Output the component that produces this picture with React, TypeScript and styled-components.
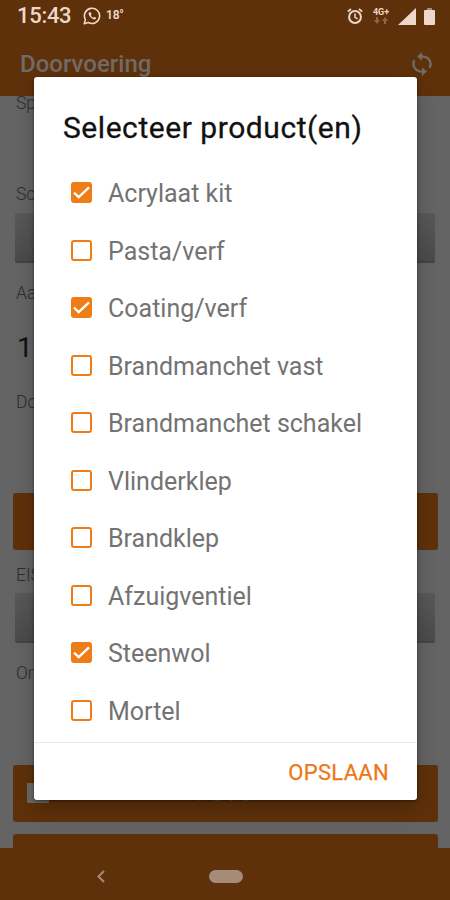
import React from "react";
import styled, { createGlobalStyle } from "styled-components";

const Global = createGlobalStyle`
  * { box-sizing: border-box; }
  body { margin: 0; background: #646464; font-family: Roboto, "Liberation Sans", sans-serif; }
`;

const Screen = styled.div`
  position: relative;
  width: 450px;
  height: 900px;
  overflow: hidden;
  display: flex;
  flex-direction: column;
  background: #646464;
`;

const StatusBar = styled.header`
  flex: none;
  height: 32px;
  display: flex;
  align-items: center;
  padding: 0 15px 0 17px;
  background: #5f310a;
  color: #eed8cb;
`;

const Clock = styled.span`
  width: 66px;
  font-size: 22px;
  font-weight: 500;
  letter-spacing: -0.3px;
  line-height: 32px;
`;

const Temperature = styled.span`
  margin-left: 5px;
  font-size: 12px;
  font-weight: 600;
  letter-spacing: -0.2px;
  line-height: 30px;
  align-self: flex-start;
`;

const StatusIcons = styled.div`
  margin-left: auto;
  display: flex;
  align-items: center;
`;

const Network = styled.div`
  display: flex;
  flex-direction: column;
  align-items: center;
  width: 18px;
  margin: 0 8px 0 9px;
  font-size: 9px;
  font-weight: 700;
  line-height: 9px;
`;

const AppBar = styled.div`
  flex: none;
  height: 64px;
  display: flex;
  align-items: center;
  justify-content: space-between;
  padding: 0 17px 0 20px;
  background: #5f310a;
  color: #706b68;
`;

const AppTitle = styled.h1`
  margin: 0;
  font-size: 24px;
  font-weight: 500;
  line-height: 64px;
`;

const Form = styled.main`
  flex: 1;
  min-height: 0;
  overflow: hidden;
  display: flex;
  flex-direction: column;
  padding: 0 12px 0 13px;

  & > :first-child {
    margin-top: -3px;
  }
`;

const Label = styled.div<{ $space: number }>`
  flex: none;
  height: 20px;
  margin-bottom: ${(p) => p.$space}px;
  padding-left: 3px;
  color: #2d2d2d;
  font-size: 17.5px;
  font-weight: 300;
  line-height: 20px;
`;

const Count = styled.div`
  flex: none;
  height: 36px;
  margin-bottom: 26px;
  padding-left: 4px;
  color: #111;
  font-size: 28px;
  line-height: 36px;
`;

const Select = styled.div<{ $space: number }>`
  flex: none;
  height: 50px;
  margin: 0 3px ${(p) => p.$space}px 2px;
  border-radius: 2px;
  border-bottom: 2px solid #444;
  background: linear-gradient(#595959, #4b4b4b);
`;

const Action = styled.div<{ $space: number }>`
  flex: none;
  height: 57px;
  margin-bottom: ${(p) => p.$space}px;
  display: flex;
  align-items: center;
  justify-content: center;
  position: relative;
  border-radius: 3px;
  background: #5f310a;
  color: #566050;
  font-size: 21px;
  letter-spacing: 1px;
`;

const Thumb = styled.span`
  position: absolute;
  left: 14px;
  top: 18px;
  width: 22px;
  height: 20px;
  background: #6b6865;
`;

const NavBar = styled.nav`
  flex: none;
  height: 52px;
  display: grid;
  grid-template-columns: 201px 48px 201px;
  align-items: center;
  justify-items: center;
  background: #5f310a;
  padding-top: 5px;
`;

const HomePill = styled.span`
  width: 34px;
  height: 13px;
  margin-left: 2px;
  border-radius: 7px;
  background: #a78b79;
`;

const Dialog = styled.section`
  position: absolute;
  left: 34px;
  top: 77px;
  width: 383px;
  height: 723px;
  display: flex;
  flex-direction: column;
  border-radius: 3px;
  background: #fff;
  box-shadow: 0 10px 22px rgba(0, 0, 0, 0.22), 0 1px 3px rgba(0, 0, 0, 0.45);
`;

const DialogTitle = styled.h2`
  flex: none;
  height: 87px;
  margin: 0;
  padding: 31px 0 0 29px;
  color: #111;
  font-size: 30px;
  font-weight: 400;
  letter-spacing: 0.55px;
  line-height: 40px;
  white-space: nowrap;
  -webkit-text-stroke: 0.3px #111;
`;

const Options = styled.div`
  flex: 1;
  min-height: 0;
  overflow: hidden;
`;

const Option = styled.div`
  height: 57.5px;
  display: flex;
  align-items: center;
  gap: 16px;
  padding-left: 37px;
  color: #737373;
  font-size: 25px;
  line-height: 30px;
  white-space: nowrap;
`;

const OptionText = styled.span`
  padding-top: 3px;
`;

const Box = styled.span<{ $on: boolean }>`
  flex: none;
  width: 21px;
  height: 21px;
  display: flex;
  align-items: center;
  justify-content: center;
  border: 2px solid #ef7d17;
  border-radius: 3px;
  background: ${(p) => (p.$on ? "#ef7d17" : "#fff")};
`;

const Footer = styled.footer`
  flex: none;
  height: 58px;
  display: flex;
  align-items: center;
  justify-content: flex-end;
  padding: 2px 28px 0 0;
  border-top: 1px solid #eaeaea;
`;

const Save = styled.span`
  color: #ee7716;
  font-size: 22px;
  font-weight: 400;
  letter-spacing: 0.3px;
  -webkit-text-stroke: 0.25px #ee7716;
`;

const products = [
  { name: "Acrylaat kit", on: true },
  { name: "Pasta/verf", on: false },
  { name: "Coating/verf", on: true },
  { name: "Brandmanchet vast", on: false },
  { name: "Brandmanchet schakel", on: false },
  { name: "Vlinderklep", on: false },
  { name: "Brandklep", on: false },
  { name: "Afzuigventiel", on: false },
  { name: "Steenwol", on: true },
  { name: "Mortel", on: false },
];

const ChatIcon = () => (
  <svg width="18" height="18" viewBox="0 0 18 18" fill="none" stroke="currentColor" strokeWidth="1.6">
    <path d="M1.2 16.8l1.2-4.2a7.6 7.6 0 1 1 2.9 2.9z" strokeLinejoin="round" />
    <path d="M6.2 5.2c-1.3 1.2-.3 3.4 1.4 5.1s4 2.9 5.2 1.5c.7-.9-.1-1.5-1.5-2.1l-1 1c-1.1-.5-2-1.4-2.5-2.5l.8-.9c-.5-1.4-1.1-2.9-2.4-2.1z" fill="currentColor" stroke="none" />
  </svg>
);

const AlarmIcon = () => (
  <svg width="16" height="17" viewBox="0 0 16 17" fill="none" stroke="currentColor">
    <circle cx="8" cy="9" r="5.9" strokeWidth="2" />
    <path d="M8 5.5v3.8l2.6 1.5" strokeWidth="1.5" />
    <path d="M.8 3.6L4 1M15.2 3.6L12 1" strokeWidth="1.8" />
  </svg>
);

const SyncIcon = () => (
  <svg width="22" height="26" viewBox="3 0 18 24" fill="currentColor" preserveAspectRatio="none">
    <path d="M12 4V1L8 5l4 4V6c3.31 0 6 2.69 6 6 0 1.01-.25 1.97-.7 2.8l1.46 1.46C19.54 15.03 20 13.57 20 12c0-4.42-3.58-8-8-8zm0 14c-3.31 0-6-2.69-6-6 0-1.01.25-1.97.7-2.8L5.24 7.74C4.46 8.97 4 10.43 4 12c0 4.42 3.58 8 8 8v3l4-4-4-4v3z" />
  </svg>
);

export default function App() {
  return (
    <>
      <Global />
      <Screen>
        <StatusBar>
          <Clock>15:43</Clock>
          <ChatIcon />
          <Temperature>18°</Temperature>
          <StatusIcons>
            <AlarmIcon />
            <Network>
              4G+
              <svg width="16" height="7" viewBox="0 0 16 7" fill="#8c674e">
                <path d="M3 0h2v3h2L4 7 1 3h2zM11 7h2V4h2l-3-4-3 4h2z" />
              </svg>
            </Network>
            <svg width="18" height="17" viewBox="0 0 18 17" fill="currentColor">
              <path d="M18 0v17H0z" />
            </svg>
            <svg width="19" height="17" viewBox="0 0 19 17">
              <path d="M11 0h5v3h-5z" fill="#a78b79" />
              <rect x="8" y="2" width="11" height="15" rx="1" fill="currentColor" />
            </svg>
          </StatusIcons>
        </StatusBar>
        <AppBar>
          <AppTitle>Doorvoering</AppTitle>
          <SyncIcon />
        </AppBar>
        <Form>
          <Label $space={71}>Sparing</Label>
          <Label $space={9}>Soort</Label>
          <Select $space={20} />
          <Label $space={27}>Aantal</Label>
          <Count>1</Count>
          <Label $space={81}>Doorvoer</Label>
          <Action $space={15} />
          <Label $space={8}>EIS</Label>
          <Select $space={20} />
          <Label $space={82}>Omschrijving</Label>
          <Action $space={12}>
            <Thumb />
            FOTO
          </Action>
          <Action $space={0} />
        </Form>
        <NavBar>
          <svg width="8" height="13" viewBox="0 0 8 13" fill="none" stroke="#a78b79" strokeWidth="2">
            <path d="M7 1L1.5 6.5 7 12" />
          </svg>
          <HomePill />
        </NavBar>
        <Dialog>
          <DialogTitle>Selecteer product(en)</DialogTitle>
          <Options>
            {products.map((p) => (
              <Option key={p.name}>
                <Box $on={p.on}>
                  {p.on && (
                    <svg width="17" height="17" viewBox="0 0 17 17" fill="none" stroke="#fff" strokeWidth="2.3">
                      <path d="M1 8.7l4.7 4.5L16 3.3" />
                    </svg>
                  )}
                </Box>
                <OptionText>{p.name}</OptionText>
              </Option>
            ))}
          </Options>
          <Footer>
            <Save>OPSLAAN</Save>
          </Footer>
        </Dialog>
      </Screen>
    </>
  );
}
